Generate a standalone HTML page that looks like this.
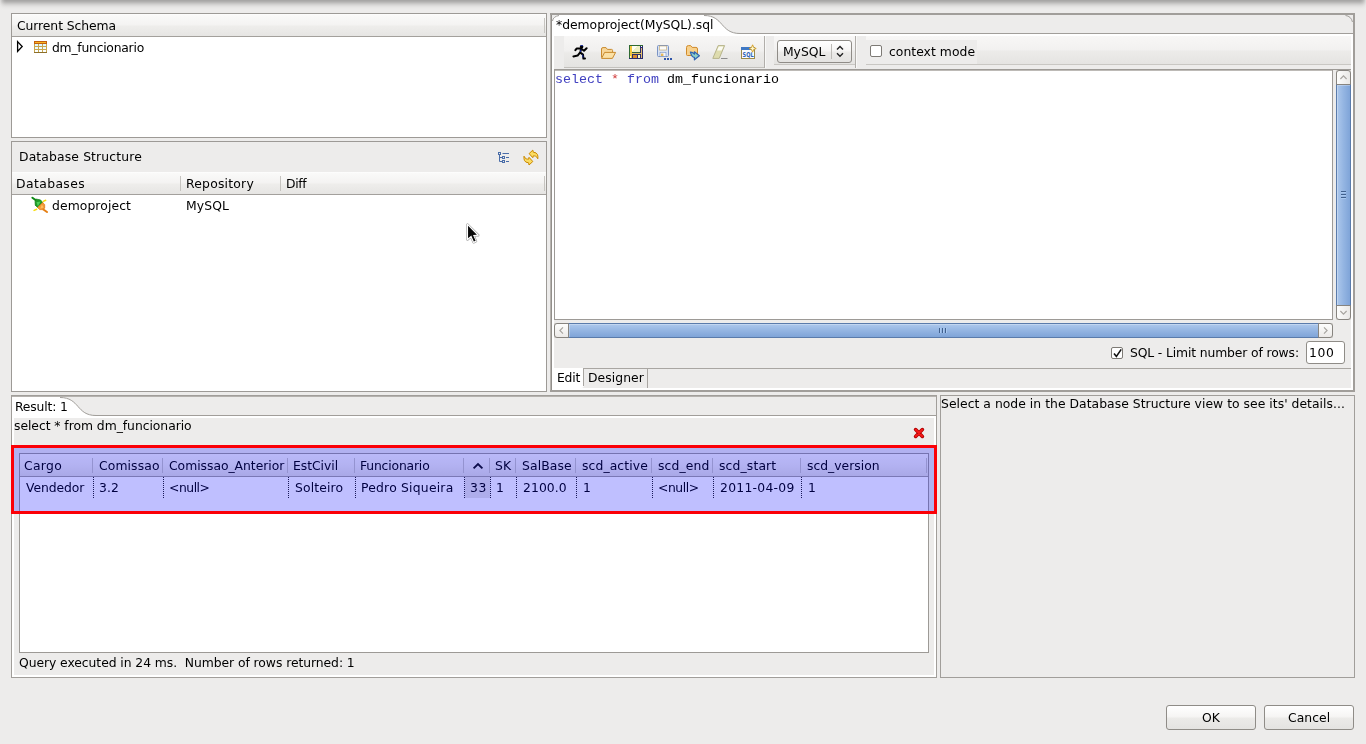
<!DOCTYPE html>
<html>
<head>
<meta charset="utf-8">
<title>SQL Editor</title>
<style>
html,body{margin:0;padding:0;}
body{width:1366px;height:744px;overflow:hidden;background:#edeceb;position:relative;
 font-family:"DejaVu Sans","Liberation Sans",sans-serif;font-size:12px;color:#000;}
.a{position:absolute;box-sizing:border-box;}
.t{position:absolute;white-space:nowrap;line-height:16px;height:16px;will-change:opacity;transform:scaleX(1.03);transform-origin:0 50%;}
.hg{background:linear-gradient(#ffffff 0,#fafaf9 1px,#f4f3f2 48%,#eeedeb 56%,#e6e5e3 100%);}
.mono{font-family:"Liberation Mono",monospace;font-size:13.33px;transform:none;}
.bd{border:1px solid #9d9a96;}
.vs{width:1px;background:#c6c4c0;}
.btn{border:1px solid #8f8c87;border-radius:3px;background:linear-gradient(#ffffff,#f6f5f4 45%,#ebeae8 55%,#e4e3e1);}
.step{border:1px solid #87847f;background:linear-gradient(#fdfdfc,#eceae8);}
.sl{box-shadow:inset 1px 1px 0 rgba(255,255,255,0.28);}
</style>
</head>
<body>
<!-- window top shadow -->
<div class="a" style="left:0;top:0;width:1366px;height:11px;background:linear-gradient(#a8a7a6 0.5px,#b0afae 1.5px,#bbbab9 2.5px,#c7c6c5 3.5px,#d2d1d0 4.5px,#dbdad9 5.5px,#e2e1e0 6.5px,#e7e6e5 7.5px,#eae9e8 8.5px,#ecebea 9.5px,#edeceb 10.5px);"></div>
<div class="a" style="left:0;top:0;width:8px;height:11px;background:linear-gradient(90deg,rgba(237,236,235,0.8) 0,rgba(237,236,235,0.4) 2px,rgba(237,236,235,0.12) 4px,rgba(237,236,235,0) 6px);"></div>
<div class="a" style="left:1358px;top:0;width:8px;height:11px;background:linear-gradient(270deg,rgba(237,236,235,0.8) 0,rgba(237,236,235,0.4) 2px,rgba(237,236,235,0.12) 4px,rgba(237,236,235,0) 6px);"></div>

<!-- ===== Current Schema panel ===== -->
<div class="a bd" style="left:11px;top:13px;width:536px;height:125px;background:#fff;"></div>
<div class="a hg" style="left:12px;top:14px;width:534px;height:22px;"></div>
<div class="a" style="left:12px;top:36px;width:534px;height:1px;background:#a3a09c;"></div>
<div class="a vs" style="left:544px;top:18px;height:15px;"></div>
<div class="t" id="cs" style="left:16.89px;top:18px;letter-spacing:-0.072px;">Current Schema</div>
<svg class="a" style="left:16px;top:40px;" width="8" height="13" viewBox="0 0 8 13"><path d="M1.6 1.6 L6.2 6.5 L1.6 11.4 Z" fill="#fff" stroke="#000" stroke-width="1.3" stroke-linejoin="miter"/></svg>
<svg class="a" style="left:34px;top:41px;" width="13" height="12" viewBox="0 0 13 12">
 <rect x="0" y="0" width="13" height="12" fill="#c9a64e"/>
 <rect x="0" y="0" width="13" height="3" fill="#c2600f"/>
 <rect x="1" y="1" width="11" height="1" fill="#f9b520"/>
 <rect x="0" y="11" width="13" height="1" fill="#8d6f2a"/>
 <g fill="#dff8ff"><rect x="1" y="3" width="3" height="2"/><rect x="5" y="3" width="3" height="2"/><rect x="9" y="3" width="3" height="2"/></g>
 <g fill="#ecfbff"><rect x="1" y="6" width="3" height="2"/><rect x="5" y="6" width="3" height="2"/><rect x="9" y="6" width="3" height="2"/></g>
 <g fill="#fbffff"><rect x="1" y="9" width="3" height="2"/><rect x="5" y="9" width="3" height="2"/><rect x="9" y="9" width="3" height="2"/></g>
</svg>
<div class="t" id="dmf" style="left:52.43px;top:40px;letter-spacing:-0.236px;">dm_funcionario</div>

<!-- ===== Database Structure panel ===== -->
<div class="a bd" style="left:11px;top:141px;width:536px;height:251px;background:#fff;"></div>
<div class="a" style="left:12px;top:142px;width:534px;height:30px;background:#edeceb;"></div>
<div class="t" id="dbs" style="left:19.14px;top:149px;letter-spacing:0.133px;">Database Structure</div>
<div class="a hg" style="left:12px;top:172px;width:534px;height:22px;"></div>
<div class="a" style="left:12px;top:194px;width:534px;height:1px;background:#a3a09c;"></div>
<div class="t" id="cdb" style="left:15.97px;top:176px;letter-spacing:0.392px;">Databases</div>
<div class="t" id="crepo" style="left:185.98px;top:176px;letter-spacing:0.214px;">Repository</div>
<div class="t" id="cdiff" style="left:285.76px;top:176px;letter-spacing:-0.33px;">Diff</div>
<div class="a vs" style="left:180px;top:176px;height:15px;"></div>
<div class="a vs" style="left:280px;top:176px;height:15px;"></div>
<div class="a vs" style="left:544px;top:176px;height:15px;"></div>
<div class="t" id="demo" style="left:51.81px;top:198px;letter-spacing:0.091px;">demoproject</div>
<div class="t" id="mysql1" style="left:186.49px;top:198px;letter-spacing:0.127px;">MySQL</div>
<!-- tree-mode icon -->
<svg class="a" style="left:498px;top:152px;" width="12" height="11" viewBox="0 0 12 11">
 <g fill="none" stroke="#4a6da8" stroke-width="1">
  <rect x="0.5" y="0.5" width="2" height="2"/><rect x="4.5" y="4.5" width="2" height="2"/><rect x="4.5" y="8.5" width="2" height="2"/>
  <path d="M1.5 3 V9.5 H4 M1.5 5.5 H4 M4.5 1.5 H11 M8 5.5 H11 M8 9.5 H11"/>
 </g>
</svg>
<!-- refresh icon -->
<svg class="a" style="left:523px;top:149px;" width="16" height="17" viewBox="0 0 16 17">
 <g fill="#fbdc62" stroke="#c98800" stroke-width="1" stroke-linejoin="round">
  <path d="M6.1 4.6 L9.8 1.1 L10.3 3.2 Q13.6 3.4 14.5 5.6 Q15.2 7.6 14.8 9.8 Q13.9 7.6 12.6 7.2 Q11.6 6.8 10.3 6.9 L9.8 8.7 Z"/>
  <path d="M9.8 12.5 L6 16 L5.6 13.8 Q2.3 13.6 1.4 11.4 Q0.7 9.4 1 7.2 Q2 9.4 3.2 9.8 Q4.3 10.2 5.6 10.2 L6 8.3 Z"/>
 </g>
</svg>
<!-- connection icon -->
<svg class="a" style="left:31px;top:196px;" width="18" height="18" viewBox="0 0 18 18">
 <path d="M1.4 1.7 L4.8 4.2" stroke="#0d8a14" stroke-width="2" stroke-linecap="round"/>
 <path d="M4.7 3 L9.5 3.9 L11.7 6.5 L6.5 11.4 L4.3 9.2 L4.05 5.7 Z" fill="#1f9b27" stroke="#0b7d12" stroke-width="0.7" stroke-linejoin="round"/>
 <path d="M5.4 6.2 L9.6 5.6 L6.9 10.3 Z" fill="#4fcf58"/>
 <path d="M11.7 6.5 L13.7 8.7 L13.7 12.2 L11.7 13.6 L8.7 13.6 L6.5 11.4 Z" fill="#f29a37" stroke="#de7410" stroke-width="0.7" stroke-linejoin="round"/>
 <path d="M10.9 8.4 L12.6 11.6 L9.4 12.4 Z" fill="#fdbf62"/>
 <path d="M12.4 13.4 L16 16.1" stroke="#e57e12" stroke-width="1.9" stroke-linecap="round"/>
 <path d="M12.3 5.4 L14.7 4.3 M3.1 14.4 L5.7 13.3" stroke="#f7dc0c" stroke-width="1.5" stroke-linecap="round"/>
</svg>
<!-- mouse pointer -->
<svg class="a" style="left:464px;top:221px;" width="18" height="25" viewBox="-2 -2 18 25">
 <path d="M1.5 1.5 L1.5 16.5 L5 13.3 L7.6 19.3 L10 18.2 L7.4 12.4 L12.2 12.2 Z" fill="none" stroke="#555" stroke-width="2.4" stroke-linejoin="round" opacity="0.6"/>
 <path d="M1.5 1.5 L1.5 16.5 L5 13.3 L7.6 19.3 L10 18.2 L7.4 12.4 L12.2 12.2 Z" fill="#fff" stroke="#fff" stroke-width="1.3" stroke-linejoin="round"/>
 <path d="M2.05 2.8 L2.05 15.3 L5.3 12.4 L7.8 18.5 L9.6 17.8 L7 11.9 L10.9 11.7 Z" fill="#0a0a0a"/>
</svg>

<!-- ===== Editor panel ===== -->
<div class="a" style="left:550px;top:13px;width:805px;height:379px;border:2px solid #a19e9a;background:#fff;"></div>
<div class="a" style="left:550px;top:15px;width:1px;height:375px;background:#b6b3af;"></div><div class="a" style="left:551px;top:15px;width:1px;height:375px;background:#928f8b;"></div>
<div class="a" style="left:552px;top:15px;width:801px;height:18px;background:#edeceb;"></div>
<div class="a" style="left:552px;top:33px;width:801px;height:1px;background:#a19e9a;"></div>
<svg class="a" style="left:552px;top:15px;" width="190" height="19" viewBox="0 0 190 19">
 <path d="M0 0 H152 C162 0 166 5 170 9.5 S178 18.5 188 18.5 V19 H0 Z" fill="#fff"/>
 <path d="M152 0.5 C162 0.5 166 5 170 9.5 S178 18.5 188 18.5" fill="none" stroke="#a19e9a" stroke-width="1"/>
 <path d="M0 5 Q1 1 6 0 L0 0 Z" fill="#edeceb"/><path d="M0.5 6 Q1 1.5 7 0.5" fill="none" stroke="#a19e9a" stroke-width="1"/>
</svg>
<svg class="a" style="left:1345px;top:15px;" width="8" height="8" viewBox="0 0 8 8"><path d="M0.5 0.5 Q6 1 7.5 7" fill="none" stroke="#a19e9a" stroke-width="1"/></svg>
<div class="t" id="tab" style="left:555.6px;top:17px;letter-spacing:-0.015px;">*demoproject(MySQL).sql</div>

<!-- toolbar -->
<div class="a" style="left:554px;top:36px;width:797px;height:33px;background:#edeceb;"></div>
<div class="a" style="left:564px;top:36px;width:787px;height:28px;background:linear-gradient(#f8f7f6 0,#f2f1f0 48%,#ecebe9 55%,#e5e4e2 100%);"></div>
<div class="a" style="left:564px;top:36px;width:200px;height:31px;background:linear-gradient(#f7f6f5 0,#f1f0ef 48%,#ebeae8 55%,#e4e3e1 100%);"></div>
<div class="a" style="left:564px;top:67px;width:201px;height:1px;background:#c3c1bd;"></div>
<div class="a" style="left:764px;top:36px;width:1px;height:32px;background:#b1aeaa;"></div>
<div class="a" style="left:765px;top:36px;width:1px;height:32px;background:#f8f8f7;"></div>
<div class="a" style="left:766px;top:36px;width:8px;height:32px;background:#edeceb;"></div>
<div class="a" style="left:774px;top:64px;width:81px;height:1px;background:#c9c7c3;"></div>
<div class="a" style="left:855px;top:36px;width:1px;height:32px;background:#b1aeaa;"></div>
<div class="a" style="left:856px;top:36px;width:1px;height:32px;background:#f8f8f7;"></div>
<div class="a" style="left:857px;top:36px;width:9px;height:32px;background:#edeceb;"></div>
<div class="a" style="left:866px;top:64px;width:485px;height:1px;background:#c9c7c3;"></div>
<div class="a" style="left:866px;top:40px;width:111px;height:24px;background:#edeceb;"></div>
<!-- combo -->
<div class="a btn" style="left:777px;top:40px;width:75px;height:23px;"></div>
<div class="t" id="mysql2" style="left:782.73px;top:44px;letter-spacing:-0.041px;">MySQL</div>
<div class="a" style="left:831px;top:44px;width:1px;height:15px;background:#bdbbb7;"></div>
<svg class="a" style="left:835px;top:45px;" width="10" height="13" viewBox="0 0 10 13"><path d="M2 4.6 L5 1.6 L8 4.6 M2 8.2 L5 11.2 L8 8.2" fill="none" stroke="#222" stroke-width="1.4"/></svg>
<!-- context mode checkbox -->
<div class="a" style="left:870px;top:45px;width:12px;height:12px;border:1px solid #7d7a75;border-radius:2px;background:#fff;"></div>
<div class="t" id="ctx" style="left:888.83px;top:44px;letter-spacing:0.038px;">context mode</div>

<!-- toolbar icons -->
<svg class="a" style="left:572px;top:44px;" width="16" height="16" viewBox="0 0 16 16">
 <circle cx="9.6" cy="2.8" r="1.8" fill="#000"/><path d="M8.6 1.6 H10.8" stroke="#1a2fb0" stroke-width="1"/>
 <path d="M9.2 4.2 L8.2 8.6 M8.8 4.6 L4.6 4.6 L3.4 6.2 M9.4 4.8 L12 6.8 L14.6 4.2 M8.2 8.4 L5.6 11.6 L1.4 12.4 M8.4 8.6 L11 10.6 L11.4 14.6 L13 14.6" fill="none" stroke="#000" stroke-width="2" stroke-linejoin="round" stroke-linecap="round"/>
 <path d="M9 5.4 L8.4 8 M10.6 10.6 L11 13.6" stroke="#1a2fb0" stroke-width="0.9"/>
</svg>
<svg class="a" style="left:600px;top:45px;" width="17" height="16" viewBox="0 0 17 16">
 <path d="M1.5 12.5 V4 Q1.5 2.6 3 2.6 H6 L7.4 4.4 H11.6 Q12.6 4.4 12.6 5.6 V7" fill="#f8d79a" stroke="#c98a2d" stroke-width="1"/>
 <path d="M1.6 13.4 L4.6 7.4 H15.6 L12.4 13.4 Z" fill="#fbe1a6" stroke="#c98a2d" stroke-width="1" stroke-linejoin="round"/>
</svg>
<svg class="a" style="left:629px;top:45px;" width="14" height="14" viewBox="0 0 14 14" shape-rendering="crispEdges">
 <rect x="0" y="0" width="14" height="14" fill="#2c2d6c"/>
 <rect x="0" y="0" width="14" height="1" fill="#2f6a32"/><rect x="0" y="0" width="1" height="13" fill="#2f6a32"/>
 <rect x="1" y="1" width="2" height="12" fill="#f4c73b"/><rect x="1" y="11" width="1" height="2" fill="#fff6d8"/>
 <rect x="3" y="1" width="8" height="6" fill="#eef0c4"/><path d="M3 1 H9 L3 6.5 Z" fill="#fdfdf4"/>
 <rect x="11" y="1" width="1" height="6" fill="#2c2d6c"/><rect x="3" y="7" width="8" height="1" fill="#2f5a3a"/>
 <rect x="12" y="1" width="1" height="1" fill="#ffffff"/><rect x="12" y="3" width="1" height="10" fill="#e4bd72"/>
 <rect x="2" y="8" width="11" height="1" fill="#eac25e"/>
 <rect x="4" y="10" width="4" height="3" fill="#d98a2e"/><rect x="9" y="10" width="2" height="3" fill="#fff7c2"/>
</svg>
<svg class="a" style="left:656px;top:44px;" width="17" height="17" viewBox="0 0 17 17">
 <rect x="1.5" y="1.5" width="11" height="11" rx="1" fill="#d8e2f2" stroke="#7a93c4" stroke-width="1"/>
 <rect x="3.6" y="2" width="6.8" height="4" fill="#fbfbfb" stroke="#c7a869" stroke-width="0.6"/>
 <rect x="4" y="8.4" width="6" height="4" fill="#f4f6fb" stroke="#7a93c4" stroke-width="0.6"/><rect x="5" y="9.6" width="2.4" height="2.4" fill="#e7b95a"/>
 <rect x="8" y="14" width="2" height="2" fill="#2f55a8"/><rect x="11" y="14" width="2" height="2" fill="#2f55a8"/><rect x="14" y="14" width="2" height="2" fill="#2f55a8"/>
</svg>
<svg class="a" style="left:684px;top:44px;" width="17" height="17" viewBox="0 0 17 17">
 <path d="M2.5 10.5 V3.5 Q2.5 1.6 4.4 1.6 H6.6 L8.2 3.4 H12 Q13.5 3.4 13.5 5 V10.5 Q13.5 11.5 12.5 11.5 H3.5 Q2.5 11.5 2.5 10.5 Z" fill="#f8d18c" stroke="#d08a2a" stroke-width="1"/>
 <path d="M6.4 8.2 Q8.6 8 10.4 10.2 L10.4 7.8 L15.4 11.8 L10.4 15.8 L10.4 13.4 Q7.8 13.6 6.4 8.2 Z" fill="#8fd0c6" stroke="#2f64b3" stroke-width="1.2" stroke-linejoin="round"/>
</svg>
<svg class="a" style="left:711px;top:44px;" width="18" height="16" viewBox="0 0 18 16">
 <path d="M7.2 1.6 H13.6 L8.2 14.4 H1.8 Z" fill="#dedcae" stroke="#b7b48c" stroke-width="1" stroke-linejoin="round"/>
 <path d="M7.8 2.4 H12.4 L10.6 6.6 H6 Z" fill="#fbfbf3"/>
 <path d="M10 14.5 H16.5" stroke="#8d8d8d" stroke-width="1"/>
</svg>
<svg class="a" style="left:740px;top:43px;" width="17" height="17" viewBox="0 0 17 17">
 <rect x="1.5" y="4.5" width="13" height="11" fill="#fafcff" stroke="#9b8a4a" stroke-width="1"/>
 <rect x="1" y="4" width="14" height="3" fill="#3f78c4"/>
 <path d="M12.6 1.8 L13.7 4.4 L16.2 5.5 L13.7 6.6 L12.6 9.2 L11.5 6.6 L9 5.5 L11.5 4.4 Z" fill="#fff6c8" stroke="#d39a1c" stroke-width="0.9"/>
 <text x="2.6" y="14" font-family="DejaVu Sans,Liberation Sans,sans-serif" font-weight="bold" font-size="6.6" fill="#2b62b5" textLength="11" lengthAdjust="spacingAndGlyphs">SQL</text>
</svg>

<!-- text editor -->
<div class="a" style="left:554px;top:68px;width:797px;height:301px;background:#edeceb;"></div>
<div class="a" style="left:554px;top:69px;width:797px;height:1px;background:#9d9a96;"></div>
<div class="a bd" style="left:554px;top:69px;width:779px;height:251px;background:#fff;"></div>
<div class="a" style="left:555px;top:70px;width:777px;height:1px;background:#bdbab6;"></div>
<div class="t mono" style="left:555px;top:72px;"><span style="color:#4040c0">select</span> <span style="color:#d03a3a">*</span> <span style="color:#4040c0">from</span> dm_funcionario</div>

<!-- vertical scrollbar -->
<div class="a" style="left:1336px;top:70px;width:15px;height:250px;background:#d9d7d4;"></div>
<div class="a sl" style="left:1336px;top:84px;width:15px;height:222px;border:1px solid #5a7bab;background:linear-gradient(90deg,#adc8ec,#94b5e2 50%,#7fa4d8);"></div>
<div class="a step" style="left:1336px;top:70px;width:15px;height:15px;border-radius:3px 3px 0 0;background:linear-gradient(90deg,#fdfdfc,#e9e8e6);"></div>
<div class="a step" style="left:1336px;top:305px;width:15px;height:15px;border-radius:0 0 3px 3px;background:linear-gradient(90deg,#fdfdfc,#e9e8e6);"></div>
<svg class="a" style="left:1339px;top:74px;" width="9" height="7" viewBox="0 0 9 7"><path d="M1.4 5 L4.5 1.9 L7.6 5" fill="none" stroke="#a7a49f" stroke-width="1.15"/></svg>
<svg class="a" style="left:1339px;top:309px;" width="9" height="7" viewBox="0 0 9 7"><path d="M1.4 2 L4.5 5.1 L7.6 2" fill="none" stroke="#a7a49f" stroke-width="1.15"/></svg>
<svg class="a" style="left:1341px;top:190px;" width="5" height="9" viewBox="0 0 5 9"><path d="M0 2.5 H5 M0 5.5 H5 M0 8.5 H5" stroke="#a9c8f0" stroke-width="1"/><path d="M0 1.5 H5 M0 4.5 H5 M0 7.5 H5" stroke="#40608d" stroke-width="1"/></svg>

<!-- horizontal scrollbar -->
<div class="a" style="left:554px;top:323px;width:779px;height:15px;background:#d9d7d4;"></div>
<div class="a sl" style="left:568px;top:323px;width:751px;height:15px;border:1px solid #5a7bab;background:linear-gradient(#adc8ec,#94b5e2 50%,#7fa4d8);"></div>
<div class="a step" style="left:554px;top:323px;width:15px;height:15px;border-radius:3px 0 0 3px;"></div>
<div class="a step" style="left:1318px;top:323px;width:15px;height:15px;border-radius:0 3px 3px 0;"></div>
<svg class="a" style="left:558px;top:326px;" width="7" height="9" viewBox="0 0 7 9"><path d="M5 1.4 L1.9 4.5 L5 7.6" fill="none" stroke="#a7a49f" stroke-width="1.15"/></svg>
<svg class="a" style="left:1322px;top:326px;" width="7" height="9" viewBox="0 0 7 9"><path d="M2 1.4 L5.1 4.5 L2 7.6" fill="none" stroke="#a7a49f" stroke-width="1.15"/></svg>
<svg class="a" style="left:938px;top:328px;" width="9" height="5" viewBox="0 0 9 5"><path d="M2.5 0 V5 M5.5 0 V5 M8.5 0 V5" stroke="#a9c8f0" stroke-width="1"/><path d="M1.5 0 V5 M4.5 0 V5 M7.5 0 V5" stroke="#40608d" stroke-width="1"/></svg>

<!-- limit rows -->
<div class="a" style="left:554px;top:338px;width:797px;height:30px;background:#edeceb;"></div>
<div class="a" style="left:1111px;top:347px;width:12px;height:12px;border:1px solid #7d7a75;border-radius:2px;background:#fff;"></div>
<svg class="a" style="left:1111px;top:346px;" width="13" height="14" viewBox="0 0 13 14"><path d="M3 7.4 L5.4 10.4 L10.2 3.4" fill="none" stroke="#111" stroke-width="1.6"/></svg>
<div class="t" id="lim" style="left:1130.01px;top:345px;letter-spacing:-0.126px;">SQL - Limit number of rows:</div>
<div class="a" style="left:1306px;top:341px;width:39px;height:23px;border:1px solid #8f8c87;border-radius:3px;background:#fff;"></div>
<div class="t" id="n100" style="left:1309.29px;top:345px;letter-spacing:0.562px;">100</div>

<!-- bottom tabs -->
<div class="a" style="left:554px;top:368px;width:797px;height:20px;background:#edeceb;"></div>
<div class="a" style="left:584px;top:368px;width:767px;height:1px;background:#a9a6a2;"></div>
<div class="a" style="left:554px;top:368px;width:30px;height:20px;background:#fff;border-radius:0 0 3px 0;"></div>
<div class="a" style="left:583px;top:368px;width:1px;height:18px;background:#a9a6a2;"></div>
<div class="a" style="left:647px;top:368px;width:1px;height:20px;background:#a9a6a2;"></div>
<div class="t" id="edit" style="left:557.09px;top:370px;letter-spacing:-0.191px;">Edit</div>
<div class="t" id="designer" style="left:588.49px;top:370px;letter-spacing:0.065px;">Designer</div>
<div class="a" style="left:552px;top:36px;width:2px;height:352px;background:#fff;"></div>

<!-- ===== Result panel ===== -->
<div class="a" style="left:11px;top:395px;width:926px;height:283px;border:1px solid #a19e9a;background:#fff;"></div>
<div class="a" style="left:12px;top:397px;width:924px;height:18px;background:#edeceb;"></div>
<div class="a" style="left:12px;top:396px;width:924px;height:1px;background:#b5b2ae;"></div>
<div class="a" style="left:12px;top:415px;width:924px;height:1px;background:#a19e9a;"></div>
<svg class="a" style="left:12px;top:397px;" width="90" height="19" viewBox="0 0 90 19">
 <path d="M0 0 H48 C58 0 62 5 66 9.5 S74 18.5 84 18.5 V19 H0 Z" fill="#fff"/>
 <path d="M48 0.5 C58 0.5 62 5 66 9.5 S74 18.5 84 18.5" fill="none" stroke="#a19e9a" stroke-width="1"/>
</svg>
<div class="a" style="left:14px;top:418px;width:920px;height:257px;background:#edeceb;"></div>
<div class="t" id="res" style="left:15.11px;top:399px;letter-spacing:-0.16px;">Result: 1</div>
<div class="t" id="sel" style="left:13.97px;top:418px;letter-spacing:-0.042px;">select * from dm_funcionario</div>
<svg class="a" style="left:913px;top:427px;" width="12" height="12" viewBox="0 0 12 12"><path d="M2.6 2.6 L9.4 9.4 M9.4 2.6 L2.6 9.4" stroke="#b00000" stroke-width="3.6" stroke-linecap="round"/><path d="M2.8 2.8 L9.2 9.2 M9.2 2.8 L2.8 9.2" stroke="#f21818" stroke-width="2.2" stroke-linecap="round"/></svg>

<!-- table -->
<div class="a bd" style="left:19px;top:453px;width:910px;height:200px;background:#fff;"></div>
<div class="a" style="left:20px;top:454px;width:908px;height:22px;background:linear-gradient(#f8f7f6,#efeeed 50%,#e2e1df);"></div>
<div class="a" style="left:20px;top:476px;width:908px;height:1px;background:#a3a09c;"></div>
<div class="a" style="left:465px;top:477px;width:25px;height:21px;background:#e9e7e4;"></div>

<div class="a vs" style="left:92px;top:458px;height:15px;"></div><div class="a vs" style="left:162px;top:458px;height:15px;"></div>
<div class="a vs" style="left:287px;top:458px;height:15px;"></div><div class="a vs" style="left:354px;top:458px;height:15px;"></div>
<div class="a vs" style="left:463px;top:458px;height:15px;"></div><div class="a vs" style="left:489px;top:458px;height:15px;"></div>
<div class="a vs" style="left:515px;top:458px;height:15px;"></div><div class="a vs" style="left:575px;top:458px;height:15px;"></div>
<div class="a vs" style="left:651px;top:458px;height:15px;"></div><div class="a vs" style="left:712px;top:458px;height:15px;"></div>
<div class="a vs" style="left:800px;top:458px;height:15px;"></div><div class="a vs" style="left:926px;top:458px;height:15px;"></div>

<div class="t" id="hCargo" style="left:24.33px;top:458px;letter-spacing:0.298px;">Cargo</div>
<div class="t" id="hCom" style="left:98.73px;top:458px;letter-spacing:0.108px;">Comissao</div>
<div class="t" id="hComA" style="left:168.61px;top:458px;letter-spacing:-0.026px;">Comissao_Anterior</div>
<div class="t" id="hEst" style="left:292.9px;top:458px;letter-spacing:-0.025px;">EstCivil</div>
<div class="t" id="hFun" style="left:360.11px;top:458px;letter-spacing:-0.163px;">Funcionario</div>
<svg class="a" style="left:472px;top:462px;" width="12" height="8" viewBox="0 0 12 8"><path d="M1.6 6.4 L6 2 L10.4 6.4" fill="none" stroke="#111" stroke-width="1.9"/></svg>
<div class="t" id="hSK" style="left:495.36px;top:458px;letter-spacing:0.111px;">SK</div>
<div class="t" id="hSal" style="left:521.72px;top:458px;letter-spacing:0.12px;">SalBase</div>
<div class="t" id="hAct" style="left:582px;top:458px;letter-spacing:0.1px;">scd_active</div>
<div class="t" id="hEnd" style="left:657.76px;top:458px;letter-spacing:0.125px;">scd_end</div>
<div class="t" id="hStart" style="left:719.18px;top:458px;letter-spacing:0.139px;">scd_start</div>
<div class="t" id="hVer" style="left:807px;top:458px;">scd_version</div>

<div class="t" id="rVend" style="left:26px;top:480px;letter-spacing:-0.079px;">Vendedor</div>
<div class="t" id="r32" style="left:99px;top:480px;letter-spacing:0.15px;">3.2</div>
<div class="t" id="rnull1" style="left:169.2px;top:480px;letter-spacing:-0.447px;">&lt;null&gt;</div>
<div class="t" id="rSolt" style="left:294.76px;top:480px;letter-spacing:0.135px;">Solteiro</div>
<div class="t" id="rPedro" style="left:360.98px;top:480px;letter-spacing:0.21px;">Pedro Siqueira</div>
<div class="t" id="r33" style="left:470.15px;top:480px;letter-spacing:0.5px;">33</div>
<div class="t" id="rone1" style="left:496.2px;top:480px;">1</div>
<div class="t" id="r2100" style="left:523.04px;top:480px;letter-spacing:0.081px;">2100.0</div>
<div class="t" id="rone2" style="left:582.9px;top:480px;">1</div>
<div class="t" id="rnull2" style="left:658.28px;top:480px;letter-spacing:-0.437px;">&lt;null&gt;</div>
<div class="t" id="rDate" style="left:719.96px;top:480px;letter-spacing:0.273px;">2011-04-09</div>
<div class="t" id="rone3" style="left:807.5px;top:480px;">1</div>

<svg class="a" style="left:93px;top:477px;" width="720" height="21" viewBox="0 0 720 21">
 <g stroke="#222" stroke-width="1" stroke-dasharray="1 1">
  <path d="M0.5 0 V21 M70.5 0 V21 M195.5 0 V21 M262.5 0 V21 M371.5 0 V21 M397.5 0 V21 M423.5 0 V21 M483.5 0 V21 M559.5 0 V21 M620.5 0 V21 M708.5 0 V21"/>
 </g>
</svg>

<!-- highlight overlay -->
<div class="a" style="left:11px;top:445px;width:926px;height:69px;border:3px solid #fb0007;background:rgba(0,0,255,0.25);"></div>

<div class="t" id="status" style="left:18.83px;top:655px;letter-spacing:-0.06px;">Query executed in 24 ms.&nbsp; Number of rows returned: 1</div>

<!-- ===== Details panel ===== -->
<div class="a" style="left:940px;top:395px;width:415px;height:283px;border:1px solid #a19e9a;background:#edeceb;"></div>
<div class="t" id="det" style="left:941.13px;top:396px;letter-spacing:0.036px;">Select a node in the Database Structure view to see its' details...</div>

<!-- ===== Buttons ===== -->
<div class="a btn" style="left:1166px;top:705px;width:90px;height:25px;"></div>
<div class="t" id="ok" style="left:1202.01px;top:710px;letter-spacing:-0.002px;">OK</div>
<div class="a btn" style="left:1264px;top:705px;width:90px;height:25px;"></div>
<div class="t" id="cancel" style="left:1288.16px;top:710px;letter-spacing:0.055px;">Cancel</div>

</body>
</html>
